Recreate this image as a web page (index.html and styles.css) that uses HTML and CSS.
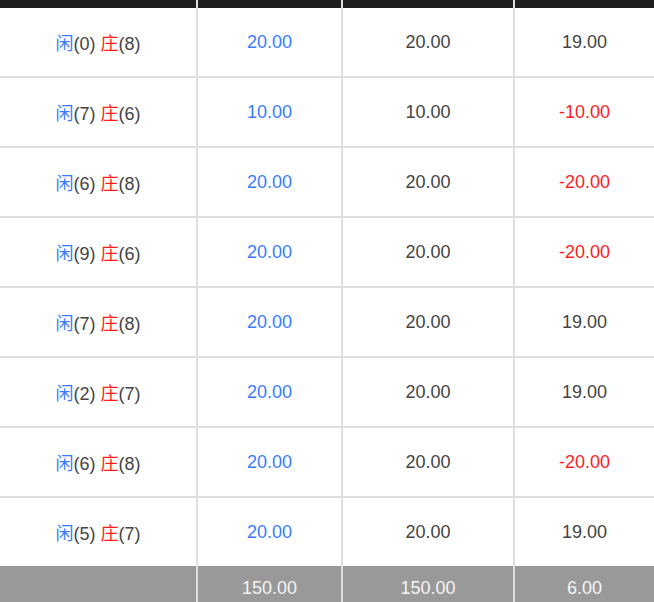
FILE: index.html
```html
<!DOCTYPE html>
<html lang="zh">
<head>
<meta charset="utf-8">
<title>记录</title>
<link rel="stylesheet" href="styles.css">
</head>
<body>
<div class="table">
  <div class="row head">
    <div class="cell c1"></div>
    <div class="cell c2"></div>
    <div class="cell c3"></div>
    <div class="cell c4"></div>
  </div>
  <div class="row">
    <div class="cell c1"><span><span class="blue">闲</span>(0) <span class="red">庄</span>(8)</span></div>
    <div class="cell c2 blue">20.00</div>
    <div class="cell c3">20.00</div>
    <div class="cell c4">19.00</div>
  </div>
  <div class="row">
    <div class="cell c1"><span><span class="blue">闲</span>(7) <span class="red">庄</span>(6)</span></div>
    <div class="cell c2 blue">10.00</div>
    <div class="cell c3">10.00</div>
    <div class="cell c4 red">-10.00</div>
  </div>
  <div class="row">
    <div class="cell c1"><span><span class="blue">闲</span>(6) <span class="red">庄</span>(8)</span></div>
    <div class="cell c2 blue">20.00</div>
    <div class="cell c3">20.00</div>
    <div class="cell c4 red">-20.00</div>
  </div>
  <div class="row">
    <div class="cell c1"><span><span class="blue">闲</span>(9) <span class="red">庄</span>(6)</span></div>
    <div class="cell c2 blue">20.00</div>
    <div class="cell c3">20.00</div>
    <div class="cell c4 red">-20.00</div>
  </div>
  <div class="row">
    <div class="cell c1"><span><span class="blue">闲</span>(7) <span class="red">庄</span>(8)</span></div>
    <div class="cell c2 blue">20.00</div>
    <div class="cell c3">20.00</div>
    <div class="cell c4">19.00</div>
  </div>
  <div class="row">
    <div class="cell c1"><span><span class="blue">闲</span>(2) <span class="red">庄</span>(7)</span></div>
    <div class="cell c2 blue">20.00</div>
    <div class="cell c3">20.00</div>
    <div class="cell c4">19.00</div>
  </div>
  <div class="row">
    <div class="cell c1"><span><span class="blue">闲</span>(6) <span class="red">庄</span>(8)</span></div>
    <div class="cell c2 blue">20.00</div>
    <div class="cell c3">20.00</div>
    <div class="cell c4 red">-20.00</div>
  </div>
  <div class="row last">
    <div class="cell c1"><span><span class="blue">闲</span>(5) <span class="red">庄</span>(7)</span></div>
    <div class="cell c2 blue">20.00</div>
    <div class="cell c3">20.00</div>
    <div class="cell c4">19.00</div>
  </div>
  <div class="row foot">
    <div class="cell c1"></div>
    <div class="cell c2">150.00</div>
    <div class="cell c3">150.00</div>
    <div class="cell c4">6.00</div>
  </div>
</div>
</body>
</html>
```
FILE: styles.css
```css
html, body {
  margin: 0;
  padding: 0;
  background: #ffffff;
}
body {
  font-family: "Liberation Sans", Arial, "Noto Sans CJK SC", sans-serif;
  font-size: 18px;
  color: #444444;
  overflow: hidden;
}
.table {
  width: 654px;
  display: flex;
  flex-direction: column;
}
.row {
  display: flex;
  height: 70px;
  border-bottom: 2px solid #dedede;
  box-sizing: border-box;
}
.row.last {
  height: 68px;
  border-bottom: none;
}
.row.head {
  height: 8px;
  background: #1e1e1e;
  border-bottom: none;
}
.row.foot {
  height: 44px;
  background: #999999;
  color: #f4f4f4;
  border-bottom: none;
}
.cell {
  box-sizing: border-box;
  display: flex;
  align-items: center;
  justify-content: center;
  white-space: nowrap;
}
.c2, .c3, .c4 {
  border-left: 2px solid #dedede;
}
.c1 { width: 196px; }
.c2 { width: 145px; }
.c3 { width: 172px; }
.c4 { width: 141px; }
.blue { color: #3a7cff; }
.red { color: #ff1c1c; }
```
